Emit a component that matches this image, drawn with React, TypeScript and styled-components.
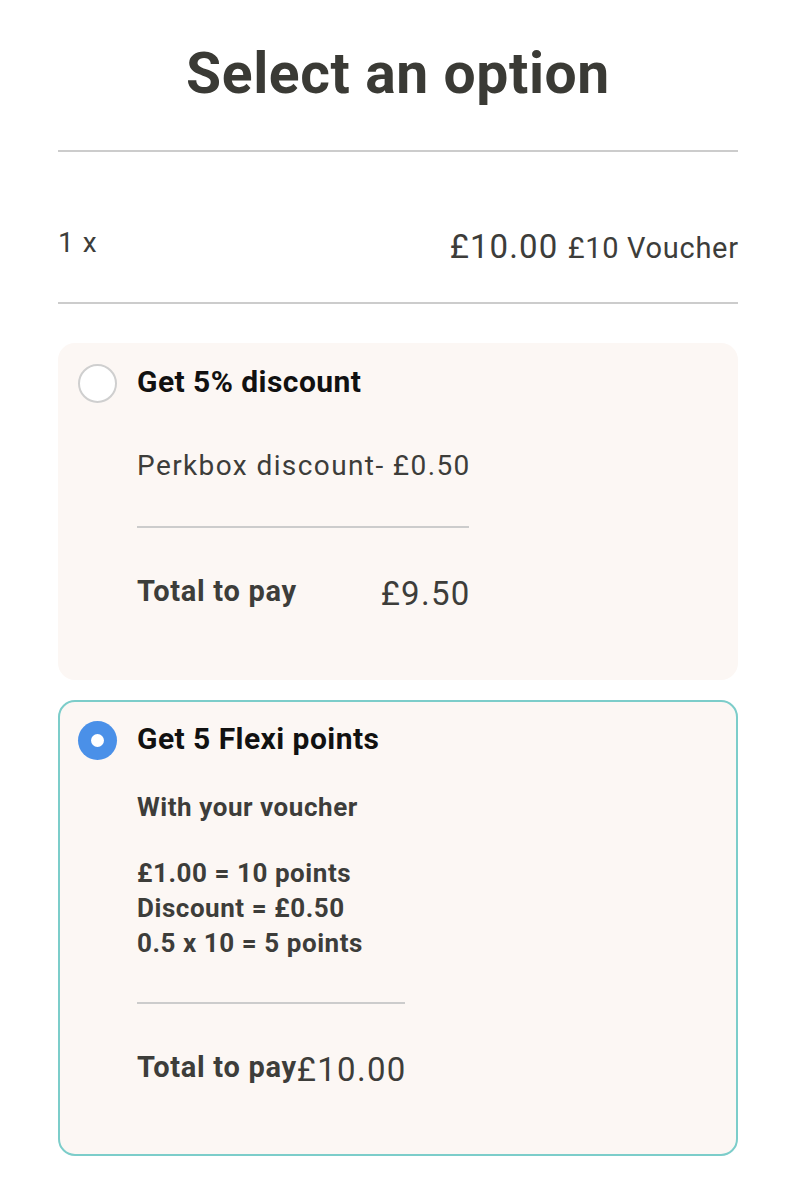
import React from "react";
import styled, { createGlobalStyle } from "styled-components";

const GlobalStyle = createGlobalStyle`
  html, body { margin: 0; padding: 0; background: #ffffff; }
  body { font-family: Roboto, "Noto Sans", Arial, sans-serif; -webkit-font-smoothing: antialiased; }
  * { box-sizing: border-box; }
`;

const Page = styled.div`
  padding: 0 59px 40px 58px;
  color: #3d3d39;
`;

const Title = styled.h1`
  margin: 0;
  padding-top: 42px;
  font-size: 57px;
  line-height: 64px;
  font-weight: 700;
  letter-spacing: 0.6px;
  text-align: center;
  color: #3a3a35;
`;

const Divider = styled.hr<{ $mt?: number }>`
  margin: ${(p) => p.$mt ?? 0}px 0 0 0;
  border: none;
  height: 2px;
  background: #cccccc;
`;

const ItemRow = styled.div`
  display: flex;
  justify-content: space-between;
  align-items: flex-start;
  height: 150px;
  padding-top: 75px;
`;

const Quantity = styled.span`
  font-size: 28px;
  line-height: 32px;
  letter-spacing: 1px;
  color: #3d3d3a;
`;

const ItemPrice = styled.span`
  font-size: 33px;
  line-height: 40px;
  letter-spacing: 1.1px;
  white-space: nowrap;
  color: #3d3d3a;
`;

const ItemName = styled.span`
  font-size: 29px;
  letter-spacing: 0.7px;
  margin-right: -0.7px;
`;

const Options = styled.div`
  display: flex;
  flex-direction: column;
  gap: 20px;
  margin-top: 39px;
`;

const Card = styled.div<{ $selected?: boolean }>`
  background: #fcf7f4;
  border: 2px solid ${(p) => (p.$selected ? "#7ccdca" : "transparent")};
  border-radius: 17px;
  padding: 19px 18px 64px 18px;
`;

const OptionHeader = styled.label`
  display: flex;
  align-items: center;
  gap: 20px;
`;

const Radio = styled.span<{ $checked?: boolean }>`
  flex: none;
  width: 39px;
  height: 39px;
  border-radius: 50%;
  background: ${(p) => (p.$checked ? "#4a90e8" : "#ffffff")};
  border: ${(p) => (p.$checked ? "none" : "2px solid #cfcfcf")};
  display: flex;
  align-items: center;
  justify-content: center;
  &::after {
    content: "";
    display: ${(p) => (p.$checked ? "block" : "none")};
    width: 13px;
    height: 13px;
    border-radius: 50%;
    background: #ffffff;
  }
`;

const OptionTitle = styled.span`
  font-size: 30px;
  line-height: 34px;
  padding-bottom: 3px;
  font-weight: 700;
  letter-spacing: 0.45px;
  color: #111111;
`;

const Detail = styled.div<{ $mt: number }>`
  width: fit-content;
  margin: ${(p) => p.$mt}px 0 0 59px;
`;

const DetailText = styled.div`
  font-size: 28px;
  line-height: 34px;
  letter-spacing: 1.4px;
  margin-right: -1.4px;
  color: #3d3d3a;
`;

const Note = styled.div<{ $mt?: number }>`
  margin-top: ${(p) => p.$mt ?? 0}px;
  font-size: 26px;
  line-height: 35px;
  font-weight: 700;
  letter-spacing: 0.55px;
  color: #3d3d3a;
`;

const TotalRow = styled.div`
  display: flex;
  justify-content: space-between;
  align-items: flex-start;
  margin-top: 46px;
`;

const TotalLabel = styled.span`
  font-size: 29px;
  line-height: 34px;
  font-weight: 700;
  letter-spacing: 0.7px;
  color: #3d3d3a;
`;

const TotalValue = styled.span`
  font-size: 33px;
  line-height: 40px;
  letter-spacing: 1.3px;
  margin-right: -1.3px;
  color: #3d3d3a;
`;

export default function App() {
  return (
    <>
      <GlobalStyle />
      <Page>
        <Title>Select an option</Title>
        <Divider $mt={44} />
        <ItemRow>
          <Quantity>1 x</Quantity>
          <ItemPrice>
            £10.00 <ItemName>£10 Voucher</ItemName>
          </ItemPrice>
        </ItemRow>
        <Divider />
        <Options>
          <Card>
            <OptionHeader>
              <Radio />
              <OptionTitle>Get 5% discount</OptionTitle>
            </OptionHeader>
            <Detail $mt={46}>
              <DetailText>Perkbox discount- £0.50</DetailText>
              <Divider $mt={43} />
              <TotalRow>
                <TotalLabel>Total to pay</TotalLabel>
                <TotalValue>£9.50</TotalValue>
              </TotalRow>
            </Detail>
          </Card>
          <Card $selected>
            <OptionHeader>
              <Radio $checked />
              <OptionTitle>Get 5 Flexi points</OptionTitle>
            </OptionHeader>
            <Detail $mt={30}>
              <Note>With your voucher</Note>
              <Note $mt={31}>£1.00 = 10 points</Note>
              <Note>Discount = £0.50</Note>
              <Note>0.5 x 10 = 5 points</Note>
              <Divider $mt={41} />
              <TotalRow>
                <TotalLabel>Total to pay</TotalLabel>
                <TotalValue>£10.00</TotalValue>
              </TotalRow>
            </Detail>
          </Card>
        </Options>
      </Page>
    </>
  );
}
